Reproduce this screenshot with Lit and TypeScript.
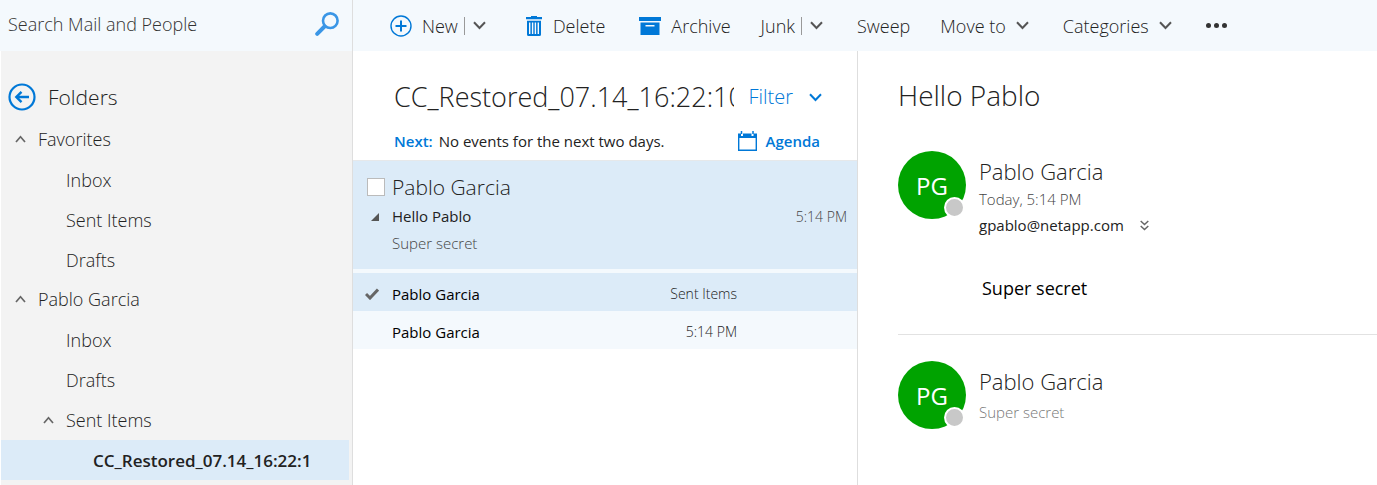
import { LitElement, html, css, svg } from "lit";
import { customElement, property } from "lit/decorators.js";
import { classMap } from "lit/directives/class-map.js";

const base = css`
  *, *::before, *::after { box-sizing: border-box; }
  button {
    font: inherit;
    color: inherit;
    background: none;
    border: 0;
    padding: 0;
    margin: 0;
    text-align: left;
    cursor: pointer;
  }
  svg { display: block; flex: none; }
  h1, h2, p, ul { margin: 0; padding: 0; font-size: inherit; font-weight: inherit; }
  ul { list-style: none; }
`;

const chevronDown = html`<svg width="13" height="9" viewBox="0 0 13 9" fill="none" stroke="currentColor" stroke-width="2" aria-hidden="true"><path d="M1 1.2 6.5 7 12 1.2" /></svg>`;
const chevronUp = html`<svg width="11" height="8" viewBox="0 0 11 8" fill="none" stroke="#666" stroke-width="1.7" aria-hidden="true"><path d="M1 7 5.5 1.8 10 7" /></svg>`;

const icons: Record<string, unknown> = {
  new: svg`<svg width="22" height="22" viewBox="0 0 22 22" fill="none" stroke="#0078d7"><circle cx="11" cy="11" r="10" stroke-width="1.4"/><path d="M11 5.500v11M5.500 11h11" stroke-width="2"/></svg>`,
  delete: svg`<svg width="18" height="20" viewBox="0 0 18 20" fill="#0078d7"><path d="M6 0h6v1h5v2.200H1V1h5z"/><path fill-rule="evenodd" d="M2 4.800h14V18.500q0 1.500-1.500 1.500h-11Q2 20 2 18.500zM4 6.500v11.500h1.400v-11.500zM6.900 6.500v11.500h1.400v-11.500zM9.700 6.500v11.500h1.400v-11.500zM12.600 6.500v11.500h1.400v-11.500z"/></svg>`,
  archive: svg`<svg width="22" height="18" viewBox="0 0 22 18" fill="#0078d7"><path d="M0 0h22v4H0z"/><path fill-rule="evenodd" d="M1.500 5.500h19V18h-19zM6.500 8v1.600h9V8z"/></svg>`,
};

interface Command { label: string; icon?: string; menu?: "split" | "arrow"; space?: "wide" | "tight"; }
const commands: Command[] = [
  { label: "New", icon: "new", menu: "split", space: "wide" },
  { label: "Delete", icon: "delete" },
  { label: "Archive", icon: "archive", space: "tight" },
  { label: "Junk", menu: "split" },
  { label: "Sweep", space: "tight" },
  { label: "Move to", menu: "arrow" },
  { label: "Categories", menu: "arrow" },
];

@customElement("mail-commands")
class MailCommands extends LitElement {
  static styles = [base, css`
    :host { display: block; min-width: 0; background: #f4f9fd; }
    .bar { display: flex; align-items: center; height: 51px; padding-left: 37px; white-space: nowrap; }
    .command { display: flex; align-items: center; margin-right: 34px; }
    .wide { margin-right: 39px; }
    .tight { margin-right: 30px; }
    .main { display: flex; align-items: center; gap: 10px; line-height: 24px; }
    .arrow { color: #555; }
    .split { margin-left: 6px; padding-left: 8px; color: #555; border-left: 1px solid #999; height: 18px; }
    .more { display: flex; gap: 3px; }
    .dot { width: 5px; height: 5px; border-radius: 50%; background: #333; }
  `];
  render() {
    return html`<div class="bar" role="toolbar" aria-label="Mail">
      ${commands.map((c) => html`<div class=${classMap({ command: true, wide: c.space === "wide", tight: c.space === "tight" })}>
        <button class="main">${c.icon ? icons[c.icon] : ""}${c.label}${c.menu === "arrow" ? html`<span class="arrow">${chevronDown}</span>` : ""}</button>
        ${c.menu === "split" ? html`<button class="split" aria-label=${`${c.label} options`}>${chevronDown}</button>` : ""}
      </div>`)}
      <button class="more" aria-label="More commands"><span class="dot"></span><span class="dot"></span><span class="dot"></span></button>
    </div>`;
  }
}

interface Folder { label: string; level: number; open?: boolean; selected?: boolean; }
const folders: Folder[] = [
  { label: "Favorites", level: 0, open: true },
  { label: "Inbox", level: 1 },
  { label: "Sent Items", level: 1 },
  { label: "Drafts", level: 1 },
  { label: "Pablo Garcia", level: 0, open: true },
  { label: "Inbox", level: 1 },
  { label: "Drafts", level: 1 },
  { label: "Sent Items", level: 1, open: true },
  { label: "CC_Restored_07.14_16:22:1", level: 2, selected: true },
];

@customElement("mail-folders")
class MailFolders extends LitElement {
  static styles = [base, css`
    :host { display: block; background: #f3f3f3; border-right: 1px solid #dedede; border-left: 1px solid #fff; }
    .head { display: flex; align-items: center; gap: 12px; padding: 30px 0 7px 7px; font-size: 21px; line-height: 32px; }
    .row { display: flex; align-items: center; width: calc(100% - 3px); height: 40px; }
    .twist { display: flex; justify-content: center; width: 11px; margin-right: 12px; }
    .level0 { padding-left: 14px; padding-bottom: 3px; }
    .level1 { padding-left: 42px; }
    .level2 { padding-left: 69px; }
    .selected { background: #dcebf8; font-weight: 600; font-size: 17px; }
  `];
  render() {
    return html`<div class="head">
        <button aria-label="Back"><svg width="28" height="28" viewBox="0 0 28 28" fill="none" stroke="#0078d7" stroke-width="2.200"><circle cx="14" cy="14" r="12.500"/><path d="M21 14H9M13.500 8.800 8.300 14l5.200 5.200" stroke-width="2.400"/></svg></button>
        <h2>Folders</h2>
      </div>
      <nav aria-label="Folders"><ul>
        ${folders.map((f) => html`<li><button class=${classMap({ row: true, [`level${f.level}`]: true, selected: !!f.selected })}>
          <span class="twist">${f.open ? chevronUp : ""}</span>${f.label}</button></li>`)}
      </ul></nav>`;
  }
}

const thread = [
  { from: "Pablo Garcia", note: "Sent Items", selected: true },
  { from: "Pablo Garcia", note: "5:14 PM", selected: false },
];

@customElement("mail-list")
class MailList extends LitElement {
  static styles = [base, css`
    :host { display: block; min-width: 0; border-right: 1px solid #dedede; background: #fff; }
    .head { display: flex; align-items: center; padding: 27px 35px 0 41px; line-height: 38px; }
    .title { flex: 1; min-width: 0; overflow: hidden; white-space: nowrap; font-size: 27px; }
    .filter { display: flex; align-items: center; gap: 16px; margin-left: 14px; font-size: 20px; color: #0078d7; }
    .next { display: flex; align-items: center; justify-content: space-between; padding: 14px 37px 8px 41px; font-size: 15px; line-height: 22px; }
    .strong { font-weight: 600; color: #0078d7; }
    .events { font-weight: 400; margin-left: 6px; }
    .agenda { display: flex; align-items: center; gap: 9px; }
    .mail { display: grid; grid-template-columns: 25px 1fr auto; align-items: center; padding: 10px 10px 13px 14px; border-top: 1px solid #e6e8ea; background: #dcebf8; font-size: 15px; line-height: 27px; }
    .check { appearance: none; width: 18px; height: 18px; margin: 0; border: 1px solid #bbb; background: #fff; }
    .name { grid-column: 2 / 4; font-size: 21px; line-height: 32px; }
    .twist { padding-left: 4px; }
    .subject { font-weight: 400; }
    .time { font-size: 14px; color: #444; }
    .preview { grid-column: 2 / 4; line-height: 26px; color: #444; }
    .thread { border-top: 4px solid #f4f9fd; }
    .item { display: grid; grid-template-columns: 27px 1fr auto; align-items: center; width: 100%; height: 38px; padding: 3px 120px 0 12px; font-size: 15px; font-weight: 400; color: #000; background: #f4f9fd; }
    .picked { background: #dcebf8; }
    .note { font-size: 14px; font-weight: 300; color: #222; }
  `];
  render() {
    return html`<div class="head">
        <h1 class="title">CC_Restored_07.14_16:22:10</h1>
        <button class="filter">Filter ${chevronDown}</button>
      </div>
      <div class="next">
        <p><span class="strong">Next:</span><span class="events">No events for the next two days.</span></p>
        <button class="agenda strong"><svg width="19" height="20" viewBox="0 0 19 20"><path d="M0 2.500h3V5h2V2.500h8.500V5h2V2.500H19V7H0z" fill="#0078d7"/><path d="M3.500 0v3M15 0v3" stroke="#0078d7" stroke-width="1.500"/><path d="M.7 3v16.300h17.600V3" fill="none" stroke="#0078d7" stroke-width="1.400"/></svg>Agenda</button>
      </div>
      <div class="mail">
        <input class="check" type="checkbox" aria-label="Select Pablo Garcia" />
        <span class="name">Pablo Garcia</span>
        <button class="twist" aria-label="Collapse thread"><svg width="8" height="8" viewBox="0 0 8 8"><path d="M8 0v8H0z" fill="#555"/></svg></button>
        <span class="subject">Hello Pablo</span><span class="time">5:14 PM</span>
        <span class="preview">Super secret</span>
      </div>
      <div class="thread">
        ${thread.map((t) => html`<button class=${classMap({ item: true, picked: t.selected })}>
          <span>${t.selected ? html`<svg width="14" height="12" viewBox="0 0 14 12" fill="none" stroke="#666" stroke-width="3"><path d="M1 6l4 4L13 1.500"/></svg>` : ""}</span>
          <span>${t.from}</span><span class="note">${t.note}</span></button>`)}
      </div>`;
  }
}

@customElement("mail-avatar")
class MailAvatar extends LitElement {
  static styles = [base, css`
    :host { display: flex; align-items: center; justify-content: center; position: relative; flex: none; width: 68px; height: 68px; border-radius: 50%; background: #00a300; color: #fff; font-size: 24px; font-weight: 400; }
    .presence { position: absolute; right: 1px; bottom: 1px; width: 21px; height: 21px; border-radius: 50%; border: 2px solid #fff; background: #c8c8c8; }
  `];
  @property() initials = "";
  render() { return html`${this.initials}<span class="presence"></span>`; }
}

@customElement("mail-reading")
class MailReading extends LitElement {
  static styles = [base, css`
    :host { display: block; min-width: 0; padding: 24px 0 0 40px; background: #fff; }
    .title { font-size: 28px; line-height: 40px; }
    .message { display: flex; gap: 13px; padding-top: 26px; }
    .first { padding-top: 36px; padding-bottom: 32px; border-bottom: 1px solid #e2e2e2; }
    .name { padding-top: 4px; font-size: 22px; line-height: 32px; }
    .date { font-size: 15px; line-height: 24px; color: #444; }
    .to { display: flex; align-items: center; gap: 16px; font-size: 15px; font-weight: 400; line-height: 28px; }
    .body { padding: 35px 0 0 3px; font-size: 18px; font-weight: 400; line-height: 28px; color: #000; }
    .preview { padding-top: 3px; font-size: 15px; line-height: 24px; color: #777; }
  `];
  render() {
    return html`<h1 class="title">Hello Pablo</h1>
      <article class="message first">
        <mail-avatar initials="PG"></mail-avatar>
        <div>
          <p class="name">Pablo Garcia</p>
          <p class="date">Today, 5:14 PM</p>
          <p class="to">gpablo@netapp.com <button aria-label="Show details"><svg width="9" height="11" viewBox="0 0 9 11" fill="none" stroke="#666" stroke-width="1.500"><path d="M.7 1l3.800 3.500L8.300 1M.7 6l3.800 3.500L8.300 6"/></svg></button></p>
          <p class="body">Super secret</p>
        </div>
      </article>
      <article class="message">
        <mail-avatar initials="PG"></mail-avatar>
        <div>
          <p class="name">Pablo Garcia</p>
          <p class="preview">Super secret</p>
        </div>
      </article>`;
  }
}

@customElement("app-root")
class AppRoot extends LitElement {
  static styles = [base, css`
    :host { display: grid; grid-template-columns: 353px minmax(300px, 505px) 1fr; grid-template-rows: auto 1fr; min-height: 100vh; overflow: hidden; font: 300 18px "Open Sans", "Noto Sans", sans-serif; color: #222; background: #fff; }
    .search { display: flex; align-items: center; padding: 0 13px 3px 8px; border-right: 1px solid #dedede; background: #f4f9fd; }
    .field { flex: 1; min-width: 0; padding: 0; border: 0; outline: 0; background: none; font: inherit; color: #222; }
    .field::placeholder { color: #333; opacity: 1; }
    .commands { grid-column: 2 / 4; }
  `];
  render() {
    return html`<div class="search" role="search">
        <input class="field" type="text" aria-label="Search Mail and People" placeholder="Search Mail and People" />
        <button aria-label="Search"><svg width="24" height="24" viewBox="0 0 24 24" fill="none" stroke="#3a96e6"><circle cx="15.300" cy="8.700" r="7.300" stroke-width="2.600"/><path d="M9.500 14.500 2.200 21.800" stroke-width="4" stroke-linecap="round"/></svg></button>
      </div>
      <mail-commands class="commands"></mail-commands>
      <mail-folders></mail-folders>
      <mail-list></mail-list>
      <mail-reading></mail-reading>`;
  }
}
